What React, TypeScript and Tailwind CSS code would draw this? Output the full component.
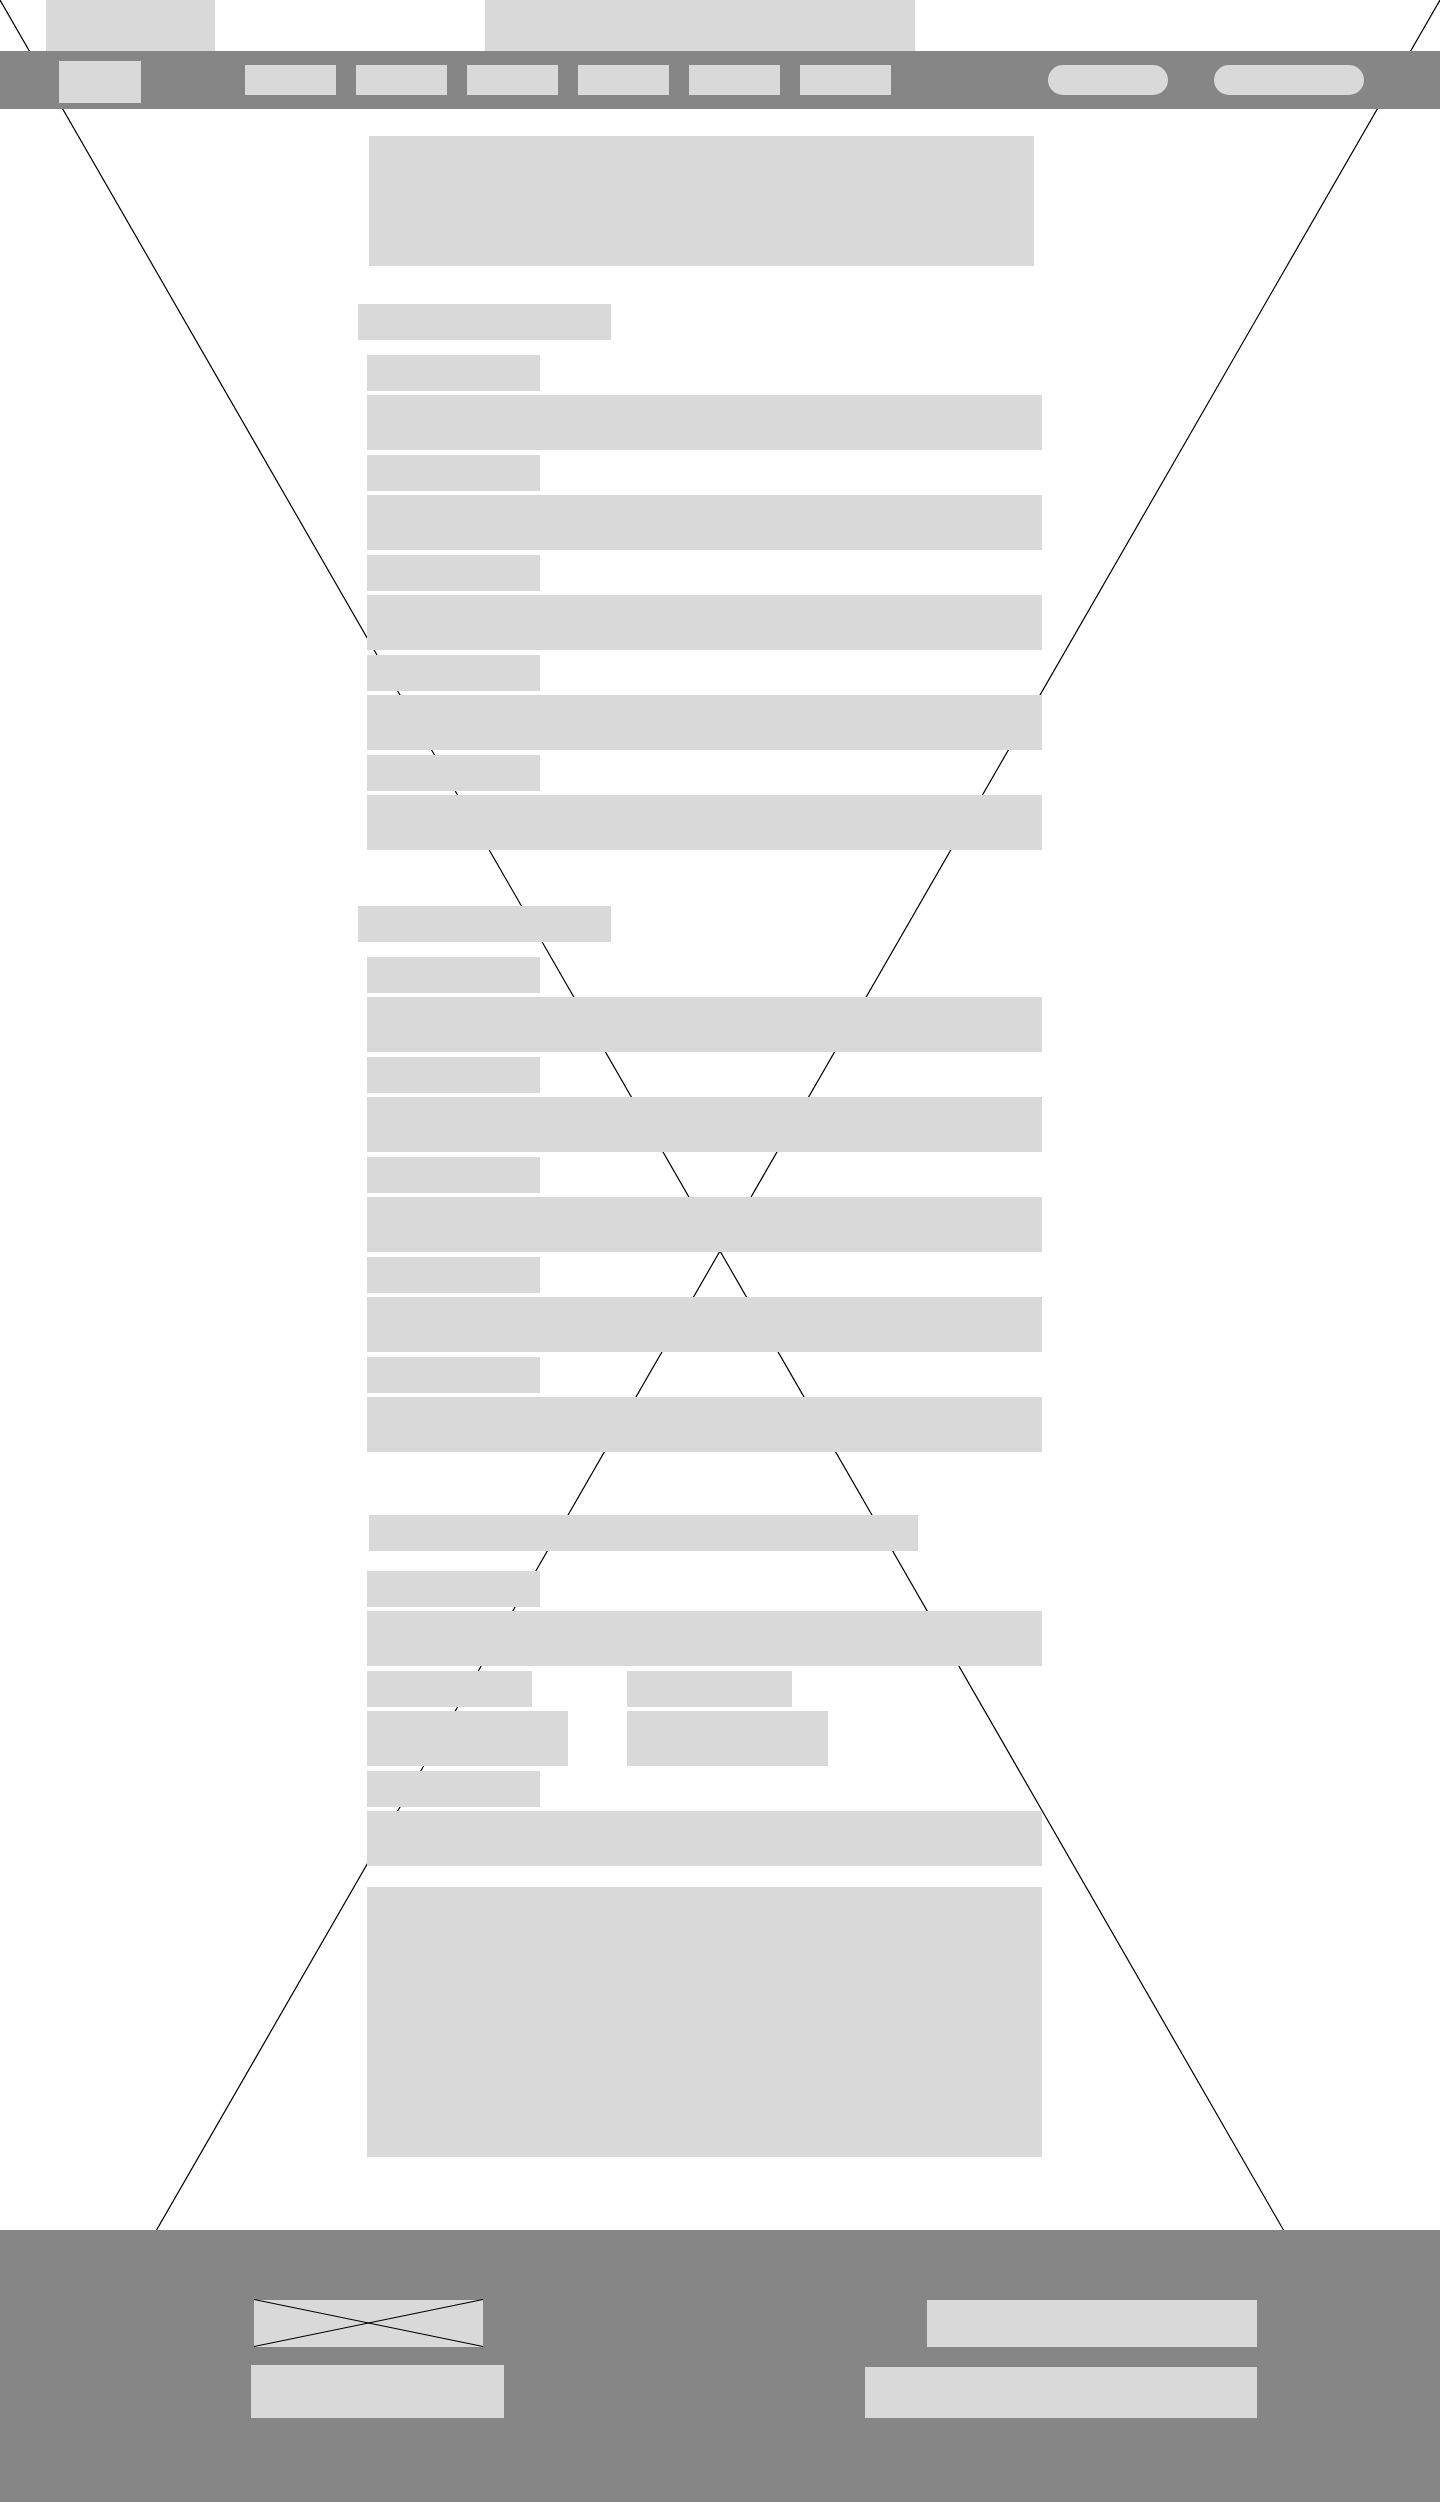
const NAV_ITEMS = ['home', 'about', 'services', 'gallery', 'news', 'contact']
const SECTION_FIELDS = ['first', 'second', 'third', 'fourth', 'fifth']

function Block({ className = '' }: { className?: string }) {
  return <div className={`bg-[#d9d9d9] ${className}`} />
}

function FieldRow() {
  return (
    <div className="flex flex-col gap-1">
      <Block className="w-[173px] h-9" />
      <Block className="w-[675px] h-[55px]" />
    </div>
  )
}

function FormSection({ className = '' }: { className?: string }) {
  return (
    <section className={className}>
      <Block className="w-[253px] h-9" />
      <div className="ml-[9px] mt-[15px] flex flex-col gap-[5px]">
        {SECTION_FIELDS.map((f) => (
          <FieldRow key={f} />
        ))}
      </div>
    </section>
  )
}

export default function App() {
  return (
    <div className="relative isolate w-full bg-white overflow-hidden">
      {/* Page background placeholder cross */}
      <svg className="absolute inset-0 -z-10 w-full h-full" viewBox="0 0 1440 2502" preserveAspectRatio="none" fill="none">
        <line x1="0" y1="0" x2="1440" y2="2502" stroke="#000" strokeWidth="1.2" />
        <line x1="1440" y1="0" x2="0" y2="2502" stroke="#000" strokeWidth="1.2" />
      </svg>

      {/* Top strip */}
      <div className="flex h-[51px] pl-[46px]">
        <Block className="w-[169px] h-full" />
        <Block className="ml-[270px] w-[430px] h-full" />
      </div>

      {/* Header */}
      <header className="flex items-center h-[58px] bg-[#868686] pl-[59px]">
        <Block className="w-[82px] h-[42px] mt-1" />
        <nav className="ml-[104px] flex gap-5">
          {NAV_ITEMS.map((n) => (
            <Block key={n} className="w-[91px] h-[30px]" />
          ))}
        </nav>
        <div className="ml-[157px] flex gap-[46px]">
          <Block className="w-[120px] h-[30px] rounded-[15px]" />
          <Block className="w-[150px] h-[30px] rounded-[15px]" />
        </div>
      </header>

      {/* Main form */}
      <main className="ml-[358px] pt-[27px]">
        <Block className="ml-[11px] w-[665px] h-[130px]" />
        <FormSection className="mt-[38px]" />
        <FormSection className="mt-[56px]" />

        <section className="mt-[63px]">
          <Block className="ml-[11px] w-[549px] h-9" />
          <div className="ml-[9px] mt-5 flex flex-col gap-[5px]">
            <FieldRow />
            <div className="flex gap-[59px]">
              <div className="flex flex-col gap-1">
                <Block className="w-[165px] h-9" />
                <Block className="w-[201px] h-[55px]" />
              </div>
              <div className="flex flex-col gap-1">
                <Block className="w-[165px] h-9" />
                <Block className="w-[201px] h-[55px]" />
              </div>
            </div>
            <FieldRow />
          </div>
          <Block className="ml-[9px] mt-[21px] w-[675px] h-[270px]" />
        </section>
      </main>

      {/* Footer */}
      <footer className="mt-[73px] flex justify-between h-[272px] bg-[#868686] pt-[70px] pl-[251px] pr-[183px]">
        <div>
          <div className="relative ml-[3px] w-[229px] h-[47px] bg-[#d9d9d9]">
            <svg className="absolute inset-0 w-[229px] h-[47px] overflow-visible" viewBox="0 0 229 47" fill="none">
              <line x1="0" y1="-0.5" x2="229" y2="46.5" stroke="#000" strokeWidth="1.2" />
              <line x1="229" y1="-0.5" x2="0" y2="46.5" stroke="#000" strokeWidth="1.2" />
            </svg>
          </div>
          <Block className="mt-[18px] w-[253px] h-[53px]" />
        </div>
        <div className="flex flex-col items-end">
          <Block className="w-[330px] h-[47px]" />
          <Block className="mt-5 w-[392px] h-[51px]" />
        </div>
      </footer>
    </div>
  )
}
